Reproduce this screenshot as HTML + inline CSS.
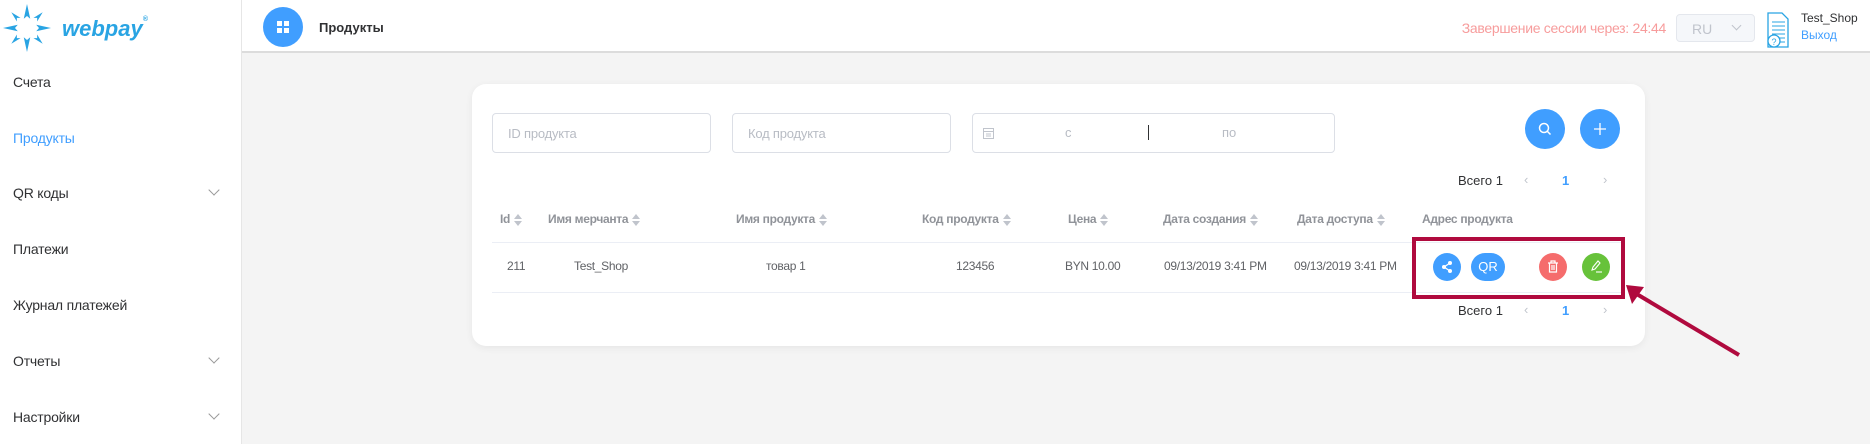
<!DOCTYPE html>
<html><head><meta charset="utf-8"><style>
*{box-sizing:border-box;margin:0;padding:0}
body{width:1870px;height:444px;overflow:hidden;background:#f4f4f4;font-family:"Liberation Sans",sans-serif;position:relative}
.abs{position:absolute}
#side{left:0;top:0;width:242px;height:444px;background:#fff;border-right:1px solid #e6e6e6}
.mi{position:absolute;left:13px;font-size:14px;color:#303133;letter-spacing:-0.2px}
.chev{position:absolute;left:210px;width:8px;height:8px;border-right:1px solid #999;border-bottom:1px solid #999;transform:rotate(45deg)}
#hdr{left:242px;top:0;width:1628px;height:53px;background:#fff;border-bottom:2px solid #dcdcdc}
#card{left:472px;top:84px;width:1173px;height:262px;background:#fff;border-radius:14px;box-shadow:0 2px 8px rgba(0,0,0,.06)}
.inp{position:absolute;top:113px;height:40px;border:1px solid #dcdfe6;border-radius:4px;font-size:13px;color:#b8bcc4;padding:12px 15px;letter-spacing:-0.2px}
.th{position:absolute;top:212px;font-size:12px;font-weight:bold;color:#909399;white-space:nowrap;letter-spacing:-0.3px}
.td{position:absolute;top:259px;font-size:12px;color:#606266;white-space:nowrap;letter-spacing:-0.3px}
.s{display:inline-block;vertical-align:middle;margin-left:4px;width:8px;height:12px;position:relative}
.s:before{content:"";position:absolute;left:0;top:0;border:4px solid transparent;border-bottom:5px solid #c0c4cc;border-top:0}
.s:after{content:"";position:absolute;left:0;top:7px;border:4px solid transparent;border-top:5px solid #c0c4cc;border-bottom:0}
.line{position:absolute;left:492px;width:1133px;height:1px;background:#ebeef5}
.circ{position:absolute;border-radius:50%}
.pg{position:absolute;font-size:13px;color:#303133}
</style></head><body>
<div id="side" class="abs">
<svg class="abs" style="left:3px;top:4px" width="48" height="48" viewBox="0 0 52 52">
<g fill="#29a4e3">
<polygon points="26,0 29.5,16 26,13 22.5,16"/><polygon points="26,52 29.5,36 26,39 22.5,36"/>
<polygon points="0,26 16,22.5 13,26 16,29.5"/><polygon points="52,26 36,22.5 39,26 36,29.5"/>
<polygon points="9,9 19,15 15,15 15,19"/><polygon points="43,9 33,15 37,15 37,19"/>
<polygon points="9,43 19,37 15,37 15,33"/><polygon points="43,43 33,37 37,37 37,33"/>
</g></svg>
<div class="abs" style="left:62px;top:16px;font-size:22px;font-weight:bold;font-style:italic;color:#29a4e3">webpay<span style="font-size:7px;vertical-align:top">®</span></div>
<div class="mi" style="top:74px">Счета</div>
<div class="mi" style="top:130px;color:#409eff">Продукты</div>
<div class="mi" style="top:185px">QR коды</div><div class="chev" style="top:186px"></div>
<div class="mi" style="top:241px">Платежи</div>
<div class="mi" style="top:297px">Журнал платежей</div>
<div class="mi" style="top:353px">Отчеты</div><div class="chev" style="top:354px"></div>
<div class="mi" style="top:409px">Настройки</div><div class="chev" style="top:410px"></div>
</div>
<div id="hdr" class="abs">
<div class="circ" style="left:21px;top:7px;width:40px;height:40px;background:#409eff"></div>
<svg class="abs" style="left:35px;top:21px" width="12" height="12"><g fill="#fff"><rect x="0" y="0" width="5" height="5"/><rect x="7" y="0" width="5" height="5"/><rect x="0" y="7" width="5" height="5"/><rect x="7" y="7" width="5" height="5"/></g></svg>
<div class="abs" style="left:77px;top:20px;font-size:13px;font-weight:bold;color:#303133">Продукты</div>
<div class="abs" style="right:204px;top:20px;font-size:14px;color:#f79c9c;letter-spacing:-0.3px;white-space:nowrap">Завершение сессии через: 24:44</div>
<div class="abs" style="left:1434px;top:14px;width:79px;height:28px;border:1px solid #e4e7ed;background:#f5f7fa;border-radius:4px;font-size:14px;color:#c0c4cc;padding:6px 0 0 15px">RU<span style="position:absolute;left:56px;top:7px;width:7px;height:7px;border-right:1px solid #c0c4cc;border-bottom:1px solid #c0c4cc;transform:rotate(45deg)"></span></div>
<svg class="abs" style="left:1523px;top:12px" width="26" height="36" viewBox="0 0 26 36"><path d="M3 1H17L23 7V35H3Z" fill="none" stroke="#29a4e3" stroke-width="1.3"/><path d="M7 10H20M7 14H20M7 18H20M7 22H20M12 26H20M12 30H20" stroke="#29a4e3"/><circle cx="9" cy="29" r="6" fill="#fff" stroke="#29a4e3" stroke-width="1.3"/><text x="6.5" y="33" font-size="9" fill="#29a4e3" font-family="Liberation Sans">?</text></svg>
<div class="abs" style="left:1559px;top:11px;font-size:12px;color:#303133">Test_Shop</div>
<div class="abs" style="left:1559px;top:28px;font-size:12px;color:#409eff">Выход</div>
</div>
<div id="card" class="abs"></div>
<div class="inp" style="left:492px;width:219px">ID продукта</div>
<div class="inp" style="left:732px;width:219px">Код продукта</div>
<div class="inp" style="left:972px;width:363px"></div>
<svg class="abs" style="left:983px;top:127px" width="11" height="12"><rect x="0.5" y="1.5" width="10" height="10" fill="none" stroke="#c0c4cc"/><path d="M0 4.5H11M3 7H8M3 9H8" stroke="#c0c4cc"/></svg>
<div class="abs" style="left:1065px;top:125px;font-size:13px;color:#b8bcc4">с</div>
<div class="abs" style="left:1148px;top:125px;width:1px;height:15px;background:#303133"></div>
<div class="abs" style="left:1222px;top:125px;font-size:13px;color:#b8bcc4">по</div>
<div class="circ" style="left:1525px;top:109px;width:40px;height:40px;background:#409eff"></div>
<svg class="abs" style="left:1538px;top:122px" width="14" height="14"><circle cx="6" cy="6" r="4.5" fill="none" stroke="#fff" stroke-width="1.5"/><path d="M9.5 9.5L12.5 12.5" stroke="#fff" stroke-width="1.5"/></svg>
<div class="circ" style="left:1580px;top:109px;width:40px;height:40px;background:#409eff"></div>
<svg class="abs" style="left:1593px;top:122px" width="14" height="14"><path d="M7 1V13M1 7H13" stroke="#fff" stroke-width="1.3"/></svg>
<div class="pg" style="left:1458px;top:173px">Всего 1</div>
<div class="pg" style="left:1524px;top:172px;color:#c0c4cc">‹</div>
<div class="pg" style="left:1562px;top:173px;color:#409eff;font-weight:bold">1</div>
<div class="pg" style="left:1603px;top:172px;color:#c0c4cc">›</div>
<div class="th" style="left:500px">Id<span class="s"></span></div>
<div class="th" style="left:548px">Имя мерчанта<span class="s"></span></div>
<div class="th" style="left:736px">Имя продукта<span class="s"></span></div>
<div class="th" style="left:922px">Код продукта<span class="s"></span></div>
<div class="th" style="left:1068px">Цена<span class="s"></span></div>
<div class="th" style="left:1163px">Дата создания<span class="s"></span></div>
<div class="th" style="left:1297px">Дата доступа<span class="s"></span></div>
<div class="th" style="left:1422px">Адрес продукта</div>
<div class="line" style="top:242px"></div>
<div class="td" style="left:507px">211</div>
<div class="td" style="left:574px">Test_Shop</div>
<div class="td" style="left:766px">товар 1</div>
<div class="td" style="left:956px">123456</div>
<div class="td" style="left:1065px">BYN 10.00</div>
<div class="td" style="left:1164px">09/13/2019 3:41 PM</div>
<div class="td" style="left:1294px">09/13/2019 3:41 PM</div>
<div class="line" style="top:292px"></div>
<div class="circ" style="left:1433px;top:253px;width:28px;height:28px;background:#409eff"></div>
<svg class="abs" style="left:1441px;top:261px" width="12" height="12"><path d="M9 2L3 6L9 10" stroke="#fff" stroke-width="1.3" fill="none"/><circle cx="9" cy="2" r="2" fill="#fff"/><circle cx="3" cy="6" r="2" fill="#fff"/><circle cx="9" cy="10" r="2" fill="#fff"/></svg>
<div class="abs" style="left:1471px;top:253px;width:34px;height:28px;border-radius:14px;background:#409eff;color:#fff;font-size:13px;text-align:center;line-height:28px">QR</div>
<div class="circ" style="left:1539px;top:253px;width:28px;height:28px;background:#f56c6c"></div>
<svg class="abs" style="left:1547px;top:260px" width="12" height="13"><path d="M1 3H11M4 3V1H8V3M2.5 3V12H9.5V3M5 5V10M7 5V10" stroke="#fff" stroke-width="1.2" fill="none"/></svg>
<div class="circ" style="left:1582px;top:253px;width:28px;height:28px;background:#67c23a"></div>
<svg class="abs" style="left:1590px;top:260px" width="13" height="13"><path d="M2 10L3 7L8 1L10 3L5 9Z" stroke="#fff" stroke-width="1.1" fill="none"/><path d="M6 12H12" stroke="#fff" stroke-width="1.1"/></svg>
<div class="abs" style="left:1412px;top:237px;width:213px;height:62px;border:4px solid #b00a3e"></div>
<div class="pg" style="left:1458px;top:303px">Всего 1</div>
<div class="pg" style="left:1524px;top:302px;color:#c0c4cc">‹</div>
<div class="pg" style="left:1562px;top:303px;color:#409eff;font-weight:bold">1</div>
<div class="pg" style="left:1603px;top:302px;color:#c0c4cc">›</div>
<svg class="abs" style="left:0;top:0" width="1870" height="444"><path d="M1739 355L1635 293" stroke="#b00a3e" stroke-width="4"/><polygon points="1626,285 1644,287 1632,304" fill="#b00a3e"/></svg>
</body></html>
